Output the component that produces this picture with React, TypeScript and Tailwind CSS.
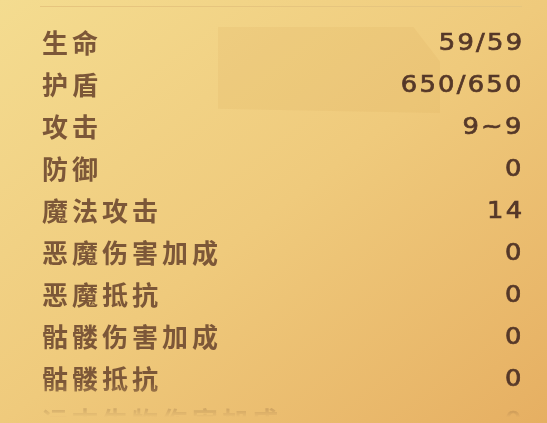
import React from "react";

const rows: [string, string][] = [
  ["生命", "59/59"],
  ["护盾", "650/650"],
  ["攻击", "9~9"],
  ["防御", "0"],
  ["魔法攻击", "14"],
  ["恶魔伤害加成", "0"],
  ["恶魔抵抗", "0"],
  ["骷髅伤害加成", "0"],
  ["骷髅抵抗", "0"],
  ["远古生物伤害加成", "0"],
];

export default function App() {
  return (
    <div className="relative w-[547px] h-[423px] overflow-hidden bg-gradient-to-br from-[#f4dc90] via-[#efca7c] to-[#e6af62]">
      <div className="absolute left-[218px] top-[27px] w-[222px] h-[86px] bg-[#d9a85a]/15 [clip-path:polygon(0_0,88%_0,100%_40%,100%_100%,0_95%)]" />
      <div className="relative flex flex-col pl-[40px] pr-[25px]">
        <div className="h-[7px] border-b border-[#e6c57e]" />
        <div className="flex flex-col pt-[14px] [mask-image:linear-gradient(to_bottom,black_376px,transparent_410px)]">
          {rows.map(([k, v]) => (
            <div key={k} className="flex items-center justify-between h-[42px] pl-[2px]">
              <span className="text-[26px] leading-none font-bold tracking-[4px] text-[#7c5738] [font-family:'Noto_Sans_CJK_SC',sans-serif]">
                {k}
              </span>
              <span className="inline-block origin-right scale-x-[1.12] mr-[-2px] text-[23px] leading-none font-normal tracking-[2px] text-[#553829] [-webkit-text-stroke:0.7px_#553829] [font-family:'DejaVu_Sans',sans-serif]">
                {v}
              </span>
            </div>
          ))}
        </div>
      </div>
    </div>
  );
}
